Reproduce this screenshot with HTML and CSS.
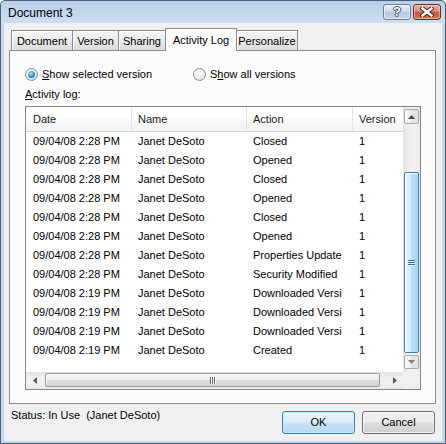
FILE: index.html
```html
<!DOCTYPE html>
<html>
<head>
<meta charset="utf-8">
<title>Document 3</title>
<link rel="stylesheet" href="styles.css">
</head>
<body>
<div class="window">
  <div class="titlebar">
    <span class="title">Document 3</span>
    <div class="caption">
      <div class="cap-btn cap-help"><span class="help-glyph">?</span></div>
      <div class="cap-btn cap-close">
        <svg width="14" height="10" viewBox="0 0 14 10"><path d="M2.5 1.5 L11.5 8.5 M11.5 1.5 L2.5 8.5" stroke="#4a241c" stroke-width="4.4" stroke-linecap="square"/><path d="M2.5 1.5 L11.5 8.5 M11.5 1.5 L2.5 8.5" stroke="#ffffff" stroke-width="2.4" stroke-linecap="square"/></svg>
      </div>
    </div>
  </div>
  <div class="client">
    <div class="tabs">
      <div class="tab w-doc">Document</div>
      <div class="tab w-ver">Version</div>
      <div class="tab w-sha">Sharing</div>
      <div class="tab w-act active">Activity Log</div>
      <div class="tab w-per">Personalize</div>
    </div>
    <div class="panel">
      <div class="radios">
        <div class="radio-item first"><span class="radio checked"></span><span><u>S</u>how selected version</span></div>
        <div class="radio-item"><span class="radio"></span><span>S<u>h</u>ow all versions</span></div>
      </div>
      <div class="caption-label"><u>A</u>ctivity log:</div>
      <div class="listview">
        <div class="lv-content">
          <div class="lv-header">
            <div class="hcell c1">Date</div>
            <div class="hcell">Name</div>
            <div class="hcell">Action</div>
            <div class="hcell last">Version</div>
          </div>
          <div class="row"><div class="cell c1">09/04/08 2:28 PM</div><div class="cell">Janet DeSoto</div><div class="cell">Closed</div><div class="cell">1</div></div>
          <div class="row"><div class="cell c1">09/04/08 2:28 PM</div><div class="cell">Janet DeSoto</div><div class="cell">Opened</div><div class="cell">1</div></div>
          <div class="row"><div class="cell c1">09/04/08 2:28 PM</div><div class="cell">Janet DeSoto</div><div class="cell">Closed</div><div class="cell">1</div></div>
          <div class="row"><div class="cell c1">09/04/08 2:28 PM</div><div class="cell">Janet DeSoto</div><div class="cell">Opened</div><div class="cell">1</div></div>
          <div class="row"><div class="cell c1">09/04/08 2:28 PM</div><div class="cell">Janet DeSoto</div><div class="cell">Closed</div><div class="cell">1</div></div>
          <div class="row"><div class="cell c1">09/04/08 2:28 PM</div><div class="cell">Janet DeSoto</div><div class="cell">Opened</div><div class="cell">1</div></div>
          <div class="row"><div class="cell c1">09/04/08 2:28 PM</div><div class="cell">Janet DeSoto</div><div class="cell">Properties Update</div><div class="cell">1</div></div>
          <div class="row"><div class="cell c1">09/04/08 2:28 PM</div><div class="cell">Janet DeSoto</div><div class="cell">Security Modified</div><div class="cell">1</div></div>
          <div class="row"><div class="cell c1">09/04/08 2:19 PM</div><div class="cell">Janet DeSoto</div><div class="cell">Downloaded Versi</div><div class="cell">1</div></div>
          <div class="row"><div class="cell c1">09/04/08 2:19 PM</div><div class="cell">Janet DeSoto</div><div class="cell">Downloaded Versi</div><div class="cell">1</div></div>
          <div class="row"><div class="cell c1">09/04/08 2:19 PM</div><div class="cell">Janet DeSoto</div><div class="cell">Downloaded Versi</div><div class="cell">1</div></div>
          <div class="row"><div class="cell c1">09/04/08 2:19 PM</div><div class="cell">Janet DeSoto</div><div class="cell">Created</div><div class="cell">1</div></div>
        </div>
        <div class="vscroll">
          <div class="sb-btn sb-up"><div class="sb-box"><svg width="7" height="4" viewBox="0 0 7 4"><polygon points="0,4 3.5,0 7,4" fill="#4a4a4a"/></svg></div></div>
          <div class="vtrack"><div class="vthumb"><svg width="7" height="6" viewBox="0 0 7 6"><path d="M0 0.5H7M0 2.5H7M0 4.5H7" stroke="#3a6c95" stroke-width="1"/><path d="M0 1.5H7M0 3.5H7M0 5.5H7" stroke="#eaf6fd" stroke-width="1"/></svg></div></div>
          <div class="sb-btn sb-down"><div class="sb-box small"><svg width="7" height="4" viewBox="0 0 7 4"><polygon points="0,0 3.5,4 7,0" fill="#7d7d7d"/></svg></div></div>
        </div>
        <div class="hscroll">
          <div class="sb-btn sb-h"><svg width="4" height="7" viewBox="0 0 4 7"><polygon points="4,0 0,3.5 4,7" fill="#5a5a5a"/></svg></div>
          <div class="htrack"><div class="hthumb"><svg width="6" height="7" viewBox="0 0 6 7"><path d="M0.5 0V7M2.5 0V7M4.5 0V7" stroke="#6b6b6b" stroke-width="1"/><path d="M1.5 0V7M3.5 0V7M5.5 0V7" stroke="#ffffff" stroke-width="1"/></svg></div></div>
          <div class="sb-btn sb-h"><svg width="4" height="7" viewBox="0 0 4 7"><polygon points="0,0 4,3.5 0,7" fill="#5a5a5a"/></svg></div>
        </div>
        <div class="corner"></div>
      </div>
    </div>
    <div class="footer">
      <div class="status">Status: In Use&nbsp; (Janet DeSoto)</div>
      <button class="btn btn-default">OK</button>
      <button class="btn">Cancel</button>
    </div>
  </div>
</div>
</body>
</html>
```

FILE: styles.css
```css
* { box-sizing: border-box; }
html, body { margin: 0; padding: 0; }
body {
  width: 446px;
  height: 444px;
  overflow: hidden;
  background: #ffffff;
  font-family: "Liberation Sans", Arial, sans-serif;
  font-size: 11px;
  color: #000;
}
.window {
  width: 446px;
  height: 444px;
  border: 1px solid #4f6074;
  border-radius: 5px 5px 0 0;
  background: linear-gradient(#b9cfe9 0px, #cddff2 22px, #c3d7ee 23px, #c3d7ee 100%);
  display: flex;
  flex-direction: column;
}
.titlebar {
  height: 22px;
  display: flex;
  align-items: flex-start;
  padding-left: 7px;
  padding-right: 4px;
}
.title {
  flex: 1;
  font-size: 12px;
  line-height: 22px;
  padding-top: 1px;
}
.caption { display: flex; gap: 2px; margin-top: 3px; }
.cap-btn {
  width: 28px;
  height: 16px;
  border-radius: 3px;
  display: flex;
  align-items: center;
  justify-content: center;
}
.cap-help {
  border: 1px solid #6c7d92;
  background: linear-gradient(#e4ecf6 0%, #d0dcea 45%, #b6c8de 50%, #c6d6e8 100%);
  box-shadow: inset 0 0 0 1px rgba(255,255,255,0.55);
}
.cap-close {
  border: 1px solid #6b2f27;
  background: linear-gradient(#eab2a5 0%, #dc8b79 45%, #c7553c 50%, #d77352 100%);
  box-shadow: inset 0 0 0 1px rgba(255,225,215,0.5);
}
.help-glyph {
  font: bold 13px "Liberation Sans", Arial, sans-serif;
  line-height: 14px;
  color: #fff;
  text-shadow: 1px 0 0 #3f4b5b, -1px 0 0 #3f4b5b, 0 1px 0 #3f4b5b, 0 -1px 0 #3f4b5b;
}
.client {
  margin: 0 3px 2px 3px;
  height: 418px;
  background: #f0f0f0;
  display: flex;
  flex-direction: column;
}
.tabs {
  height: 27px;
  padding-top: 5px;
  padding-left: 7px;
  display: flex;
  align-items: flex-end;
}
.tab {
  height: 20px;
  border: 1px solid #898c95;
  border-bottom: 0;
  margin-left: -1px;
  padding-top: 3px;
  line-height: 15px;
  text-align: center;
  white-space: nowrap;
  background: linear-gradient(#f5f5f5 0%, #ebebeb 50%, #dcdcdc 100%);
  box-shadow: inset 1px 1px 0 #ffffff;
}
.tab:first-child { margin-left: 0; }
.tab.active {
  height: 23px;
  margin-bottom: -1px;
  padding-top: 4px;
  background: #fcfcfc;
  box-shadow: none;
  position: relative;
  z-index: 1;
}
.w-doc { width: 62px; }
.w-ver { width: 47px; }
.w-sha { width: 48px; }
.w-act { width: 72px; }
.w-per { width: 62px; }
.panel {
  margin-left: 5px;
  width: 427px;
  height: 354px;
  border: 1px solid #898c95;
  background: #fcfcfc;
  padding: 16px 0 0 15px;
}
.radios { display: flex; height: 14px; line-height: 14px; }
.radio-item { display: flex; align-items: center; }
.radio-item.first { width: 168px; }
.radio {
  width: 13px;
  height: 13px;
  margin-right: 4px;
  border-radius: 50%;
  border: 1px solid #8a8b8c;
  background: radial-gradient(circle at 40% 35%, #ffffff 0%, #ececec 55%, #cfcfcf 100%);
  position: relative;
}
.radio.checked::after {
  content: "";
  position: absolute;
  left: 2px;
  top: 2px;
  width: 7px;
  height: 7px;
  border-radius: 50%;
  background: radial-gradient(circle at 40% 35%, #b6ecff 0%, #3a9ee6 45%, #16508f 100%);
}
.caption-label { margin-top: 6px; line-height: 14px; }
.listview {
  margin-top: 5px;
  width: 396px;
  height: 284px;
  border: 1px solid #828790;
  background: #ffffff;
  display: grid;
  grid-template-columns: 377px 17px;
  grid-template-rows: 265px 17px;
}
.lv-content { overflow: hidden; }
.lv-header {
  display: grid;
  grid-template-columns: 106px 115px 106px 50px;
  height: 25px;
  border-bottom: 1px solid #d5d5d5;
  background: linear-gradient(#ffffff 0%, #ffffff 45%, #f7f8f9 55%, #f2f3f5 100%);
}
.hcell {
  padding-left: 6px;
  line-height: 24px;
  border-right: 1px solid #e3e4e6;
  color: #1b1b1b;
  white-space: nowrap;
  overflow: hidden;
}
.hcell.last { border-right: 0; }
.row {
  display: grid;
  grid-template-columns: 106px 115px 106px 50px;
  height: 19px;
  line-height: 19px;
}
.cell {
  padding-left: 6px;
  padding-right: 4px;
  white-space: nowrap;
  overflow: hidden;
}
.c1 { padding-left: 7px; }
.vscroll {
  display: flex;
  flex-direction: column;
  background: linear-gradient(to right, #e2e2e2 0%, #efefef 35%, #f1f1f1 70%, #e8e8e8 100%);
}
.sb-btn { display: flex; justify-content: center; }
.sb-up { height: 17px; align-items: flex-end; }
.sb-down { height: 17px; align-items: flex-start; }
.sb-box {
  width: 15px;
  height: 15px;
  border: 1px solid #a9a9a9;
  border-radius: 2px;
  background: linear-gradient(to right, #fbfbfb, #eaeaea 50%, #dedede 52%, #e6e6e6);
  display: flex;
  align-items: center;
  justify-content: center;
}
.sb-box.small { height: 14px; }
.vtrack { flex: 1; display: flex; flex-direction: column; align-items: center; }
.vthumb {
  margin-top: 48px;
  width: 15px;
  height: 181px;
  border: 1px solid #3c7fb1;
  border-radius: 2px;
  background: linear-gradient(to right, #eaf6fd 0%, #d3ecfb 45%, #b6def6 52%, #a9d7f3 100%);
  box-shadow: inset 1px 1px 0 rgba(255,255,255,0.8);
  display: flex;
  align-items: center;
  justify-content: center;
}
.hscroll {
  display: flex;
  background: linear-gradient(#e2e2e2 0%, #efefef 35%, #f1f1f1 70%, #e8e8e8 100%);
}
.sb-h { width: 17px; align-items: center; }
.htrack { flex: 1; }
.hthumb {
  margin-top: 1px;
  margin-left: 2px;
  width: 335px;
  height: 14px;
  border: 1px solid #989898;
  border-radius: 2px;
  background: linear-gradient(#f6f6f6 0%, #ececec 48%, #dcdcdc 52%, #d3d3d3 100%);
  box-shadow: inset 1px 1px 0 rgba(255,255,255,0.8);
  display: flex;
  align-items: center;
  justify-content: center;
}
.corner { background: #f0f0f0; }
.footer {
  height: 37px;
  padding: 7px 7px 0 7px;
  display: flex;
  align-items: flex-start;
}
.status {
  flex: 1;
  line-height: 14px;
  margin-top: -3px;
  white-space: nowrap;
}
.btn {
  -webkit-appearance: none;
  appearance: none;
  width: 73px;
  height: 23px;
  margin: 0 0 0 7px;
  padding: 0;
  border: 1px solid #707070;
  border-radius: 3px;
  font-family: inherit;
  font-size: 11px;
  color: #000;
  line-height: 21px;
  text-align: center;
  background: linear-gradient(#f2f2f2 0%, #ebebeb 48%, #dddddd 52%, #cfcfcf 100%);
  box-shadow: inset 0 0 0 1px rgba(255,255,255,0.75);
}
.btn-default {
  border-color: #3c7fb1;
  background: linear-gradient(#eaf5fc 0%, #dcedf9 48%, #c6e2f6 52%, #b5d8f2 100%);
  box-shadow: inset 0 0 0 1px rgba(200,235,255,0.9);
}
```
